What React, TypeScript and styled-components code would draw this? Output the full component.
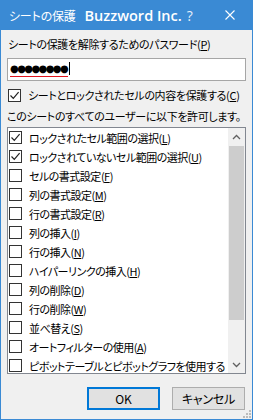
import React from "react";
import styled, { createGlobalStyle } from "styled-components";

const Global = createGlobalStyle`
  html, body { margin: 0; padding: 0; background: #f0f0f0; }
  body { width: 253px; height: 420px; overflow: hidden; }
  * { box-sizing: border-box; }
`;

const JP = `"Noto Sans CJK JP", "Noto Sans", sans-serif`;

const Window = styled.div`
  width: 253px;
  height: 420px;
  display: flex;
  flex-direction: column;
  border: 1px solid #3a8ad4;
  border-top: none;
  background: #f0f0f0;
  font-family: ${JP};
  font-feature-settings: "palt";
  font-size: 11px;
  letter-spacing: -0.35px;
  color: #000;
  position: relative;
`;

const TitleBar = styled.div`
  height: 30px;
  margin: 0 -1px;
  background: #3a8ad4;
  display: flex;
  align-items: center;
  padding-left: 9px;
  color: #fff;
  flex-shrink: 0;
`;

const TitleText = styled.span`
  font-size: 12px;
  letter-spacing: -0.2px;
`;

const Brand = styled.span`
  margin-left: 9px;
  font-family: "Open Sans", sans-serif;
  font-weight: 600;
  font-size: 14.5px;
  letter-spacing: 0;
`;

const Help = styled.span`
  margin-left: 5px;
  font-family: "Open Sans", sans-serif;
  font-size: 14px;
  letter-spacing: 0;
  color: #e6f0fa;
`;

const CloseBtn = styled.span`
  margin-left: auto;
  margin-right: 18px;
  display: flex;
`;

const Body = styled.div`
  flex: 1;
  display: flex;
  flex-direction: column;
  padding: 6px 6px 0 6px;
`;

const Label = styled.div`
  height: 16px;
  line-height: 16px;
  padding-left: 1px;
  white-space: nowrap;
`;

const PwInput = styled.div`
  margin-top: 6px;
  height: 23px;
  background: #fff;
  border: 1px solid #a6a6a6;
  display: flex;
  align-items: center;
  padding-left: 2px;
`;

const Dots = styled.span`
  font-family: "DejaVu Sans", sans-serif;
  font-size: 10px;
  letter-spacing: -1.6px;
  line-height: 12px;
  border-bottom: 1.5px solid #e0141e;
  padding-bottom: 1px;
  padding-right: 1px;
`;

const Caret = styled.span`
  width: 1px;
  height: 13px;
  background: #000;
  margin-left: 1px;
  margin-top: -3px;
`;

const CheckRow = styled.label`
  margin-top: 5px;
  height: 18px;
  display: flex;
  align-items: center;
  gap: 7px;
  padding-left: 1px;
  white-space: nowrap;
`;

const Info = styled.div`
  margin-top: 4px;
  height: 16px;
  line-height: 16px;
  white-space: nowrap;
`;

const ListBox = styled.div`
  margin-top: 3px;
  height: 247px;
  background: #fff;
  border: 1px solid #828790;
  display: flex;
  overflow: hidden;
`;

const Items = styled.div`
  flex: 1;
  display: flex;
  flex-direction: column;
  overflow: hidden;
  letter-spacing: -0.5px;
`;

const Item = styled.div`
  height: 19px;
  flex-shrink: 0;
  display: flex;
  align-items: center;
  gap: 7px;
  padding-left: 1px;
  white-space: nowrap;
`;

const Box = styled.span`
  width: 13px;
  height: 13px;
  flex-shrink: 0;
  border: 1px solid #333;
  background: #fff;
  display: flex;
  align-items: center;
  justify-content: center;
`;

const Scrollbar = styled.div`
  width: 17px;
  background: #f0f0f0;
  display: flex;
  flex-direction: column;
`;

const Arrow = styled.div`
  height: 17px;
  display: flex;
  align-items: center;
  justify-content: center;
`;

const Thumb = styled.div`
  margin: 1px 1px 0 1px;
  height: 174px;
  background: #cdcdcd;
`;

const Track = styled.div`
  flex: 1;
`;

const Buttons = styled.div`
  margin-top: 13px;
  display: flex;
  justify-content: flex-end;
  gap: 12px;
  padding-right: 1px;
`;

const Button = styled.button<{ $default?: boolean }>`
  width: 73px;
  height: 23px;
  padding: 0;
  background: #e1e1e1;
  border: ${(p) => (p.$default ? "2px solid #0078d7" : "1px solid #adadad")};
  font-family: ${JP};
  font-feature-settings: "palt";
  font-size: 12px;
  letter-spacing: -0.2px;
  color: #000;
`;

const Grip = styled.svg`
  position: absolute;
  right: 1px;
  bottom: 1px;
`;

const Check = () => (
  <svg width="11" height="11" viewBox="0 0 11 11">
    <path d="M1.5 5.5 L4.3 8.3 L9.6 2.2" fill="none" stroke="#222" strokeWidth="1.2" />
  </svg>
);

const CheckBox = ({ on }: { on?: boolean }) => <Box>{on && <Check />}</Box>;

const items: { t: string; k: string; on?: boolean }[] = [
  { t: "ロックされたセル範囲の選択", k: "L", on: true },
  { t: "ロックされていないセル範囲の選択", k: "U", on: true },
  { t: "セルの書式設定", k: "F" },
  { t: "列の書式設定", k: "M" },
  { t: "行の書式設定", k: "R" },
  { t: "列の挿入", k: "I" },
  { t: "行の挿入", k: "N" },
  { t: "ハイパーリンクの挿入", k: "H" },
  { t: "列の削除", k: "D" },
  { t: "行の削除", k: "W" },
  { t: "並べ替え", k: "S" },
  { t: "オートフィルターの使用", k: "A" },
  { t: "ピボットテーブルとピボットグラフを使用する", k: "" },
];

export default function App() {
  return (
    <>
      <Global />
      <Window>
        <TitleBar>
          <TitleText>シートの保護</TitleText>
          <Brand>Buzzword Inc.</Brand>
          <Help>?</Help>
          <CloseBtn>
            <svg width="10" height="10" viewBox="0 0 10 10">
              <path d="M0.5 0.5 L9.5 9.5 M9.5 0.5 L0.5 9.5" stroke="#fff" strokeWidth="1.1" />
            </svg>
          </CloseBtn>
        </TitleBar>
        <Body>
          <Label>
            シートの保護を解除するためのパスワード(<u>P</u>)
          </Label>
          <PwInput>
            <Dots>●●●●●●●●</Dots>
            <Caret />
          </PwInput>
          <CheckRow>
            <CheckBox on />
            <span>
              シートとロックされたセルの内容を保護する(<u>C</u>)
            </span>
          </CheckRow>
          <Info>このシートのすべてのユーザーに以下を許可します。</Info>
          <ListBox>
            <Items>
              {items.map((it) => (
                <Item key={it.t}>
                  <CheckBox on={it.on} />
                  <span>
                    {it.t}
                    {it.k && (
                      <>
                        (<u>{it.k}</u>)
                      </>
                    )}
                  </span>
                </Item>
              ))}
            </Items>
            <Scrollbar>
              <Arrow>
                <svg width="9" height="6" viewBox="0 0 9 6">
                  <path d="M1 5 L4.5 1.5 L8 5" fill="none" stroke="#606060" strokeWidth="1.3" />
                </svg>
              </Arrow>
              <Thumb />
              <Track />
              <Arrow>
                <svg width="9" height="6" viewBox="0 0 9 6">
                  <path d="M1 1 L4.5 4.5 L8 1" fill="none" stroke="#606060" strokeWidth="1.3" />
                </svg>
              </Arrow>
            </Scrollbar>
          </ListBox>
          <Buttons>
            <Button $default>OK</Button>
            <Button>キャンセル</Button>
          </Buttons>
        </Body>
        <Grip width="8" height="8" viewBox="0 0 8 8">
          <rect x="6" y="0" width="2" height="2" fill="#bcbcbc" />
          <rect x="3" y="3" width="2" height="2" fill="#bcbcbc" />
          <rect x="6" y="3" width="2" height="2" fill="#bcbcbc" />
          <rect x="0" y="6" width="2" height="2" fill="#bcbcbc" />
          <rect x="3" y="6" width="2" height="2" fill="#bcbcbc" />
          <rect x="6" y="6" width="2" height="2" fill="#bcbcbc" />
        </Grip>
      </Window>
    </>
  );
}
